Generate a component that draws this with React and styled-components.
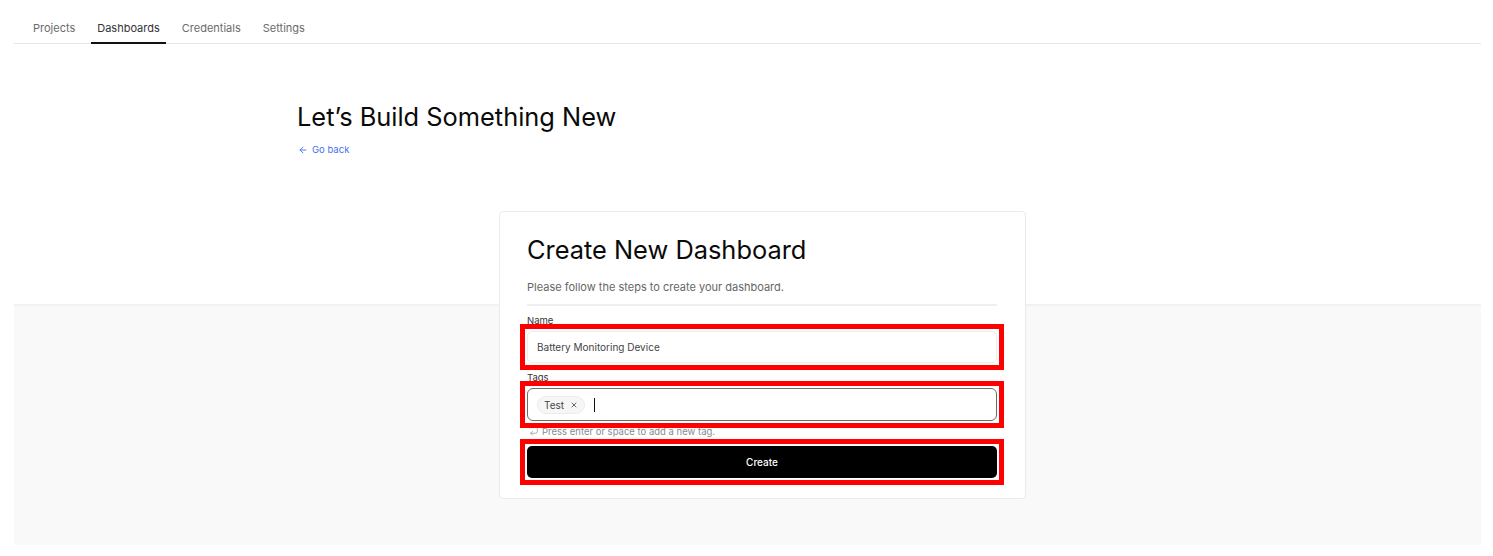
import styled, { createGlobalStyle } from 'styled-components';
import { ArrowLeft, CornerDownLeft, X } from 'lucide-react';

const GlobalStyle = createGlobalStyle`
    * {
        box-sizing: border-box;
    }
    body {
        margin: 0;
        background: #ffffff;
        font-family: Inter, 'Noto Sans', sans-serif;
        color: #111;
    }
`;

const tabs = ['Projects', 'Dashboards', 'Credentials', 'Settings'];

const App = () => {
    return (
        <Page>
            <GlobalStyle />
            <Nav>
                {tabs.map((tab) => (
                    <Tab key={tab} $active={tab === 'Dashboards'}>
                        {tab}
                    </Tab>
                ))}
            </Nav>
            <Hero>
                <Heading>Let’s Build Something New</Heading>
                <BackLink href="#">
                    <ArrowLeft size={10} strokeWidth={2.2} />
                    Go back
                </BackLink>
            </Hero>
            <GreySection>
                <Card>
                    <CardTitle>Create New Dashboard</CardTitle>
                    <CardSubtitle>
                        Please follow the steps to create your dashboard.
                    </CardSubtitle>
                    <Field>
                        <Label>Name</Label>
                        <Marked>
                            <TextInput
                                type="text"
                                defaultValue="Battery Monitoring Device"
                            />
                        </Marked>
                    </Field>
                    <Field>
                        <Label>Tags</Label>
                        <Marked>
                            <TagBox>
                                <TagChip>
                                    Test
                                    <X size={8} strokeWidth={2.2} />
                                </TagChip>
                                <Caret />
                            </TagBox>
                        </Marked>
                        <Hint>
                            <CornerDownLeft size={10} strokeWidth={1.6} />
                            Press enter or space to add a new tag.
                        </Hint>
                    </Field>
                    <Marked>
                        <CreateButton type="button">Create</CreateButton>
                    </Marked>
                </Card>
            </GreySection>
        </Page>
    );
};

const Page = styled.div`
    padding: 0 12px 0 14px;
`;

const Nav = styled.nav`
    display: flex;
    gap: 10px;
    height: 44px;
    padding-left: 13px;
    border-bottom: 1px solid #e7e7e7;
`;

const Tab = styled.div`
    height: 44px;
    padding: 20px 6px 0;
    font-size: 11px;
    line-height: 16px;
    color: ${(p) => (p.$active ? '#333' : '#6b6b6b')};
    border-bottom: 2px solid ${(p) => (p.$active ? '#111' : 'transparent')};
    margin-bottom: -1px;
    cursor: pointer;
`;

const Hero = styled.section`
    height: 260px;
    padding: 57px 0 0 283px;
`;

const Heading = styled.h1`
    margin: 0;
    font-size: 25.4px;
    line-height: 32px;
    font-weight: 400;
    color: #0a0a0a;
`;

const BackLink = styled.a`
    display: inline-flex;
    align-items: center;
    gap: 4px;
    margin-top: 10px;
    padding-left: 1px;
    font-size: 9.5px;
    line-height: 14px;
    color: #3f74f0;
    text-decoration: none;
`;

const GreySection = styled.section`
    height: 241px;
    background: #f9f9f9;
    border-top: 2px solid #f1f1f1;
`;

const Card = styled.div`
    width: 527px;
    margin: -95px 0 0 485px;
    padding: 22px 28px 20px 27px;
    background: #fff;
    border: 1px solid #ebebeb;
    border-radius: 4px;
`;

const CardTitle = styled.h2`
    margin: 0;
    font-size: 25.4px;
    line-height: 32px;
    font-weight: 400;
    color: #0a0a0a;
`;

const CardSubtitle = styled.p`
    margin: 13px 0 0;
    padding-bottom: 9px;
    font-size: 11px;
    line-height: 16px;
    color: #666;
    border-bottom: 2px solid #efefef;
`;

const Field = styled.div`
    display: flex;
    flex-direction: column;
    margin-top: 9px;
    margin-bottom: 8px;
`;

const Label = styled.label`
    font-size: 9.5px;
    line-height: 12px;
    color: #333;
    margin-bottom: 4px;
`;

const Marked = styled.div`
    outline: 5px solid #ff0000;
    outline-offset: 2px;
`;

const TextInput = styled.input`
    display: block;
    width: 100%;
    height: 32px;
    padding: 0 9px;
    font-family: inherit;
    font-size: 10px;
    color: #444;
    border: 1px solid #ececec;
    border-radius: 5px;
    background: #fff;
    outline: none;
`;

const TagBox = styled.div`
    display: flex;
    align-items: center;
    gap: 9px;
    height: 33px;
    padding: 0 9px;
    border: 1.5px solid #6a6a6a;
    border-radius: 6px;
    background: #fff;
`;

const TagChip = styled.span`
    display: inline-flex;
    align-items: center;
    gap: 6px;
    height: 18px;
    padding: 0 6px 0 6px;
    font-size: 10px;
    color: #444;
    background: #f6f6f6;
    border: 1px solid #ececec;
    border-radius: 999px;

    svg {
        color: #333;
    }
`;

const Caret = styled.span`
    width: 1px;
    height: 14px;
    background: #111;
`;

const Hint = styled.div`
    display: flex;
    align-items: center;
    gap: 3px;
    margin-top: 5px;
    padding-left: 2px;
    font-size: 9.5px;
    line-height: 12px;
    color: #8a8a8a;
`;

const CreateButton = styled.button`
    display: block;
    width: 100%;
    height: 32px;
    font-family: inherit;
    font-size: 10px;
    font-weight: 500;
    color: #fff;
    background: #000;
    border: none;
    border-radius: 5px;
    cursor: pointer;
`;

export default App;
